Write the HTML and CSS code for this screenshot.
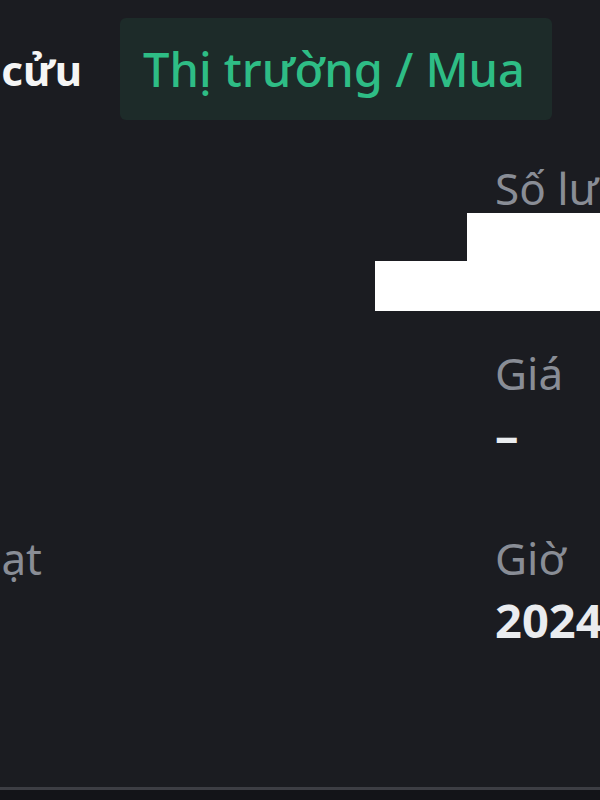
FILE: index.html
```html
<!doctype html>
<html>

<head>
    <title>Chi tiết lệnh</title>
    <link rel="stylesheet" href="styles.css">
</head>

<body>
    <div class="screen">
        <div class="header">
            <div class="title"><span>Lệnh nghiên cửu</span></div>
            <div class="badge">Thị trường / Mua</div>
        </div>

        <div class="details">
            <div class="cell"></div>
            <div class="cell right">
                <div class="label">Số lượng</div>
                <div class="value redacted">
                    <div class="blot-top"></div>
                    <div class="blot-bottom"></div>
                </div>
            </div>

            <div class="cell"></div>
            <div class="cell right">
                <div class="label">Giá</div>
                <div class="value">–</div>
            </div>

            <div class="cell left">
                <div class="label clip"><span>Điều kiện kích hoạt</span></div>
            </div>
            <div class="cell right">
                <div class="label">Giờ</div>
                <div class="value">2024-05-12 10:23:45</div>
            </div>
        </div>

        <div class="footer"></div>
    </div>
</body>

</html>
```

FILE: styles.css
```css
html,
body {
    margin: 0;
    height: 100%;
    background-color: #1b1c21;
    overflow: hidden;
}

body {
    font-family: "Noto Sans", Arial, sans-serif;
    color: #eaecef;
}

.screen {
    height: 800px;
    display: flex;
    flex-direction: column;
}

.header {
    display: flex;
    align-items: center;
    padding-top: 18px;
    height: 102px;
}

.title {
    width: 82px;
    display: flex;
    justify-content: flex-end;
    overflow: hidden;
    white-space: nowrap;
    font-size: 42px;
    font-weight: 700;
    color: #f5f5f5;
}

.badge {
    margin-left: 38px;
    height: 102px;
    width: 432px;
    box-sizing: border-box;
    padding-left: 23px;
    display: flex;
    align-items: center;
    background-color: #1d2b29;
    border-radius: 6px;
    color: #2ebd85;
    font-size: 47px;
    font-weight: 500;
}

.details {
    display: grid;
    grid-template-columns: 495px 105px;
    grid-auto-rows: 185px;
    padding-top: 42px;
}

.cell {
    overflow: hidden;
    white-space: nowrap;
}

.label {
    font-size: 44px;
    line-height: 52px;
    color: #898d96;
}

.value {
    font-size: 47px;
    line-height: 52px;
    font-weight: 700;
    margin-top: 10px;
}

.clip {
    width: 42px;
    display: flex;
    justify-content: flex-end;
}

.redacted {
    position: relative;
    height: 98px;
    margin-top: -1px;
    overflow: visible;
}

.right {
    overflow: visible;
}

.blot-top {
    position: absolute;
    left: -28px;
    top: 0;
    width: 133px;
    height: 50px;
    background-color: #ffffff;
}

.blot-bottom {
    position: absolute;
    left: -120px;
    top: 48px;
    width: 225px;
    height: 50px;
    background-color: #ffffff;
}

.footer {
    margin-top: auto;
    height: 10px;
    border-top: 3px solid #3d3e44;
    background-color: #131418;
}
```
